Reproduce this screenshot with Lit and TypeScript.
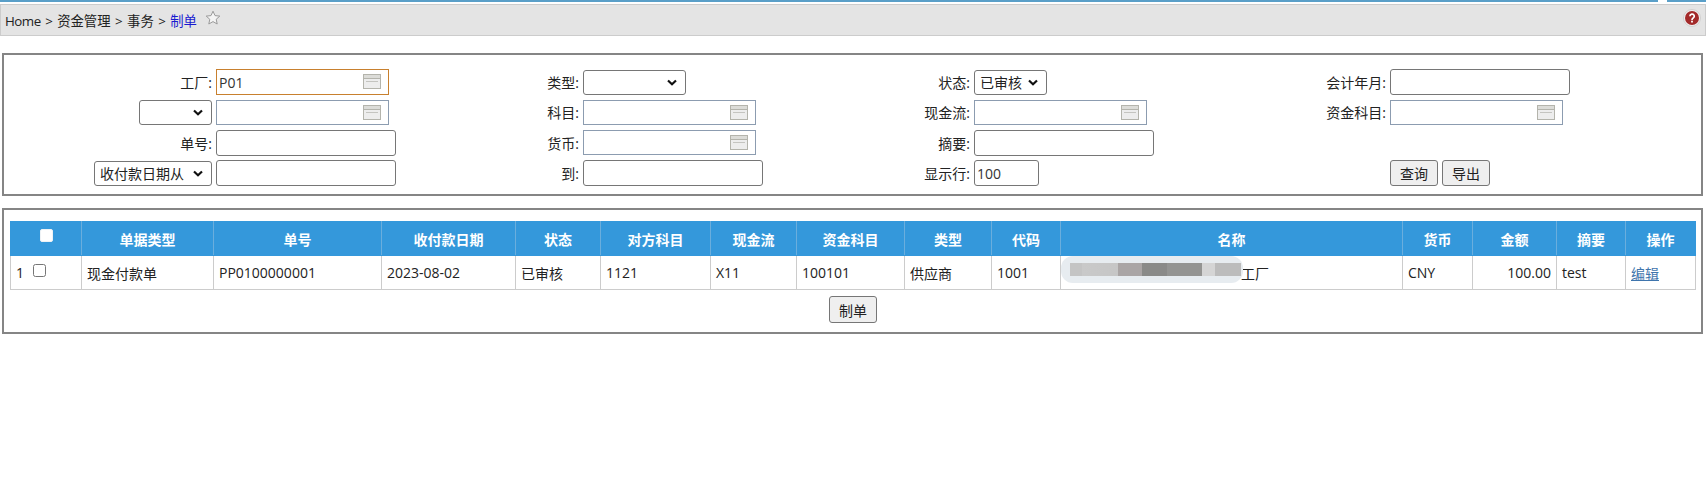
import { LitElement, html, css } from "lit";
import { customElement } from "lit/decorators.js";

const COLS = [
  { t: "", w: 71 }, { t: "单据类型", w: 132 }, { t: "单号", w: 168 }, { t: "收付款日期", w: 134 },
  { t: "状态", w: 85 }, { t: "对方科目", w: 110 }, { t: "现金流", w: 86 }, { t: "资金科目", w: 108 },
  { t: "类型", w: 87 }, { t: "代码", w: 69 }, { t: "名称", w: 342 }, { t: "货币", w: 70 },
  { t: "金额", w: 84 }, { t: "摘要", w: 69 }, { t: "操作", w: 70 },
];

const CHEVRON = "url(\"data:image/svg+xml,%3Csvg xmlns='http://www.w3.org/2000/svg' width='10' height='7' viewBox='0 0 10 7'%3E%3Cpath d='M1 1.500L5 5.200L9 1.500' fill='none' stroke='%23111' stroke-width='2.200'/%3E%3C/svg%3E\")";

@customElement("app-root")
export class AppRoot extends LitElement {
  static styles = css`
    :host { display: block; font-family: "Open Sans", "Noto Sans CJK SC", sans-serif; font-size: 14px; color: #222; background: #fff; height: 496px; overflow: hidden; }
    .topline { height: 2px; margin-bottom: 2px; background: linear-gradient(to right, #5a9fc8 1658px, #fff 1658px, #fff 1667px, #5a9fc8 1667px); }
    .crumb { display: flex; align-items: center; height: 32px; box-sizing: border-box; border: 1px solid #ccc; background: #e4e4e4; padding-left: 4px; white-space: pre; font-size: 13.33px; word-spacing: 1px; }
    .crumb .home { letter-spacing: -0.5px; }
    .crumb .cur { color: #1a1ad0; }
    .star { margin-left: 8px; margin-top: -5px; }
    .help { margin-left: auto; margin-right: 4px; margin-top: -5px; }
    .panel { border: 2px solid #858585; margin: 0 3px 0 2px; box-sizing: border-box; }
    .search { margin-top: 17px; height: 143px; padding: 12px 0 0 0; }
    .grid { display: grid; grid-template-columns: 212px 180px 187px 180px 211px 181px 235px 1fr; grid-auto-rows: 30.3px; align-items: center; }
    .lab { text-align: right; padding-right: 4px; display: flex; justify-content: flex-end; align-items: center; }
    input.txt { box-sizing: border-box; height: 26px; width: 180px; font: inherit; color: #333; border: 1px solid #767676; border-radius: 3px; padding: 0 2px; margin: 0; display: block; background: #fff; outline: none; }
    .lookup { position: relative; width: 173px; }
    .lookup input { box-sizing: border-box; width: 173px; height: 25px; font: inherit; color: #333; border: 1px solid #8c9cb0; padding: 0 2px; margin: 0; display: block; outline: none; background: #fff; border-radius: 0; }
    .lookup.on input { height: 26px; border-color: #c8802e; }
    .lookup svg { position: absolute; right: 8px; top: 5px; }
    select { box-sizing: border-box; height: 25px; font: inherit; color: #222; border: 1px solid #767676; border-radius: 3px; margin: 0; padding: 0 20px 0 5px; appearance: none; -webkit-appearance: none; background: #fff no-repeat right 8px center; background-image: var(--chev); }
    .s73 { width: 73px; }
    .s118 { width: 118px; }
    .s103 { width: 103px; }
    input.w65 { width: 65px; }
    .btns { display: flex; gap: 4px; }
    button { box-sizing: border-box; height: 26px; font: inherit; color: #222; background: #efefef; border: 1px solid #767676; border-radius: 3px; padding: 0 9px; margin: 0; }
    .list { margin-top: 12px; height: 126px; padding: 11px 5px 0 6px; display: flex; flex-direction: column; align-items: center; }
    table { border-collapse: collapse; table-layout: fixed; width: 1685px; }
    th { background: #3498db; color: #fff; font-weight: bold; height: 33px; padding: 0; text-align: center; border: 1px solid #3498db; border-left-color: #6aaedd; border-right-color: #6aaedd; }
    th:first-child { border-left-color: #3498db; }
    th:last-child { border-right-color: #3498db; }
    th input { margin: 0; width: 13px; height: 13px; vertical-align: 2px; appearance: none; -webkit-appearance: none; background: #fff; border: 1px solid #eef2f5; border-radius: 2px; }
    td { height: 34px; box-sizing: border-box; padding: 0 5px; border: 1px solid #ccc; white-space: nowrap; position: relative; }
    td.num { text-align: right; }
    .chk { margin: 0 0 0 9px; width: 13px; height: 13px; vertical-align: 0; position: relative; top: -1px; }
    td a { color: #3f75ad; text-decoration: underline; }
    .name { padding-left: 180px; }
    .blur { position: absolute; left: 0; top: 0; width: 182px; height: 27px; border-radius: 12px; background:
      linear-gradient(to right, #e7ecf0 9px, #c4c4c4 9px, #c4c4c4 21px, #c9c9c9 21px, #c6c6c6 57px, #aaa5a5 57px, #aaa5a5 81px, #8a8a88 81px, #8a8a88 106px, #949492 106px, #949492 141px, #d5d5d5 141px, #d5d5d5 154px, #bcbcbc 154px, #bcbcbc 180px, #e7ecf0 180px) center / 100% 13px no-repeat, #e7ecf0; }
    .act { margin-top: 6px; height: 27px; }
  `;

  private cal() {
    return html`<svg width="18" height="15" viewBox="0 0 18 15"><rect x="0.5" y="0.5" width="17" height="14" fill="#ededed" stroke="#b4b4ac"/><rect x="1" y="1" width="16" height="3" fill="#dcdcd8"/><path d="M1 4.500H17" stroke="#b4b4ac"/><path d="M3 7.500H15" stroke="#c4c4c0"/></svg>`;
  }
  private look(on = false, v = "") {
    return html`<div class="lookup ${on ? "on" : ""}"><input .value=${v} />${this.cal()}</div>`;
  }

  render() {
    return html`
      <div class="topline"></div>
      <div class="crumb">
        <span><span class="home">Home</span> &gt; 资金管理 &gt; 事务 &gt; <span class="cur">制单</span></span>
        <svg class="star" width="16" height="16" viewBox="0 0 16 16"><path d="M8 1.200l2 4.400 4.800.5-3.600 3.200 1 4.700L8 11.600l-4.200 2.400 1-4.700L1.200 6.100 6 5.600z" fill="#f4f4f4" stroke="#9a9a9a" stroke-linejoin="round"/></svg>
        <svg class="help" width="18" height="18" viewBox="0 0 18 18"><circle cx="9" cy="9" r="8.500" fill="#f2efef" stroke="#d0d0d0"/><circle cx="9" cy="9" r="7" fill="#a32a2a"/><path d="M6.900 7.200a2.200 2.100 0 1 1 3.300 1.800c-.8.5-1.200 1-1.200 1.900" fill="none" stroke="#fff" stroke-width="1.700"/><rect x="8.100" y="11.700" width="1.800" height="1.800" fill="#fff"/></svg>
      </div>
      <div class="panel search" style="--chev:${CHEVRON}">
        <div class="grid">
          <div class="lab">工厂:</div><div>${this.look(true, "P01")}</div>
          <div class="lab">类型:</div><div><select class="s103"><option></option></select></div>
          <div class="lab">状态:</div><div><select class="s73"><option>已审核</option></select></div>
          <div class="lab">会计年月:</div><div><input class="txt" /></div>

          <div class="lab"><select class="s73"><option></option></select></div><div>${this.look()}</div>
          <div class="lab">科目:</div><div>${this.look()}</div>
          <div class="lab">现金流:</div><div>${this.look()}</div>
          <div class="lab">资金科目:</div><div>${this.look()}</div>

          <div class="lab">单号:</div><div><input class="txt" /></div>
          <div class="lab">货币:</div><div>${this.look()}</div>
          <div class="lab">摘要:</div><div><input class="txt" /></div>
          <div></div><div></div>

          <div class="lab"><select class="s118"><option>收付款日期从</option></select></div><div><input class="txt" /></div>
          <div class="lab">到:</div><div><input class="txt" /></div>
          <div class="lab">显示行:</div><div><input class="txt w65" .value=${"100"} /></div>
          <div></div><div class="btns"><button>查询</button><button>导出</button></div>
        </div>
      </div>
      <div class="panel list">
        <table>
          <colgroup>${COLS.map((c) => html`<col style="width:${c.w}px" />`)}</colgroup>
          <thead><tr>${COLS.map((c, i) => html`<th>${i === 0 ? html`<input type="checkbox" />` : c.t}</th>`)}</tr></thead>
          <tbody><tr>
            <td>1<input class="chk" type="checkbox" /></td>
            <td>现金付款单</td><td>PP0100000001</td><td>2023-08-02</td><td>已审核</td><td>1121</td><td>X11</td><td>100101</td><td>供应商</td><td>1001</td>
            <td class="name"><div class="blur"></div>工厂</td>
            <td>CNY</td><td class="num">100.00</td><td>test</td><td><a href="#">编辑</a></td>
          </tr></tbody>
        </table>
        <button class="act">制单</button>
      </div>
    `;
  }
}
